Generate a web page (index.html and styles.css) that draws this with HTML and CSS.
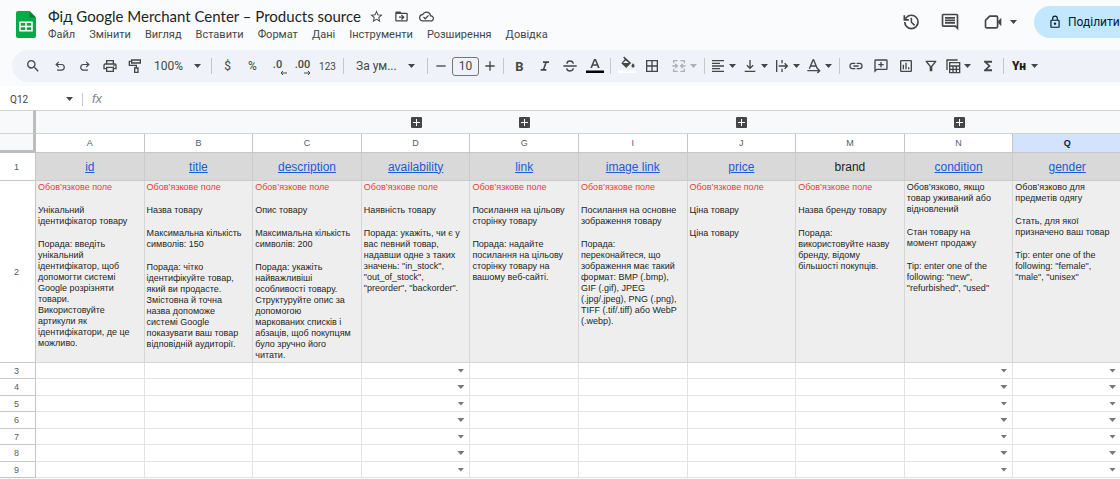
FILE: index.html
```html
<!DOCTYPE html>
<html lang="uk">
<head>
<meta charset="utf-8">
<meta name="viewport" content="width=device-width, initial-scale=1">
<title>Фід Google Merchant Center – Products source</title>
<link rel="stylesheet" href="styles.css">
</head>
<body>
<header class="top">
  <svg class="logo" viewBox="0 0 20 27" aria-hidden="true"><path fill="#00ac47" d="M2 0h11.500l6.500 6.500V25a2 2 0 0 1-2 2H2a2 2 0 0 1-2-2V2a2 2 0 0 1 2-2z"/><path fill="#00832d" d="M13.500 0 20 6.500h-6.500z"/><path fill="none" stroke="#fff" stroke-width="1.500" d="M4 11.200h12v8.600H4zM10 11v9M4 15.500h12"/></svg>
  <div class="heading">
    <div class="title-row">
      <h1 class="title">Фід Google Merchant Center – Products source</h1>
      <button class="icon-btn" aria-label="Позначити"><svg class="ic ic-15" viewBox="0 0 24 24"><path d="m22 9.240-7.190-.620L12 2 9.190 8.630 2 9.240l5.460 4.730L5.820 21 12 17.270 18.180 21l-1.630-7.030L22 9.240zM12 15.400l-3.760 2.270 1-4.280-3.320-2.880 4.380-.380L12 6.100l1.710 4.040 4.380.380-3.320 2.880 1 4.280L12 15.400z"/></svg></button>
      <button class="icon-btn" aria-label="Перемістити"><svg class="ic ic-15" viewBox="0 0 24 24"><path d="M20 6h-8l-2-2H4a2 2 0 0 0-2 2v12a2 2 0 0 0 2 2h16a2 2 0 0 0 2-2V8a2 2 0 0 0-2-2zm0 12H4V8h16v10zm-8.800-2 1.400 1.400L17 13l-4.400-4.400-1.400 1.400 2 2H8v2h5.200z"/></svg></button>
      <button class="icon-btn" aria-label="Стан документа"><svg class="ic ic-15" viewBox="0 0 24 24"><path d="M19.350 10.040A7.490 7.490 0 0 0 12 4C9.110 4 6.600 5.640 5.350 8.040A5.994 5.994 0 0 0 0 14c0 3.310 2.690 6 6 6h13c2.760 0 5-2.240 5-5 0-2.640-2.050-4.780-4.650-4.960zM19 18H6a4 4 0 0 1-.420-7.980l1.070-.110.500-.950A5.469 5.469 0 0 1 12 6c2.620 0 4.880 1.860 5.390 4.430l.300 1.500 1.530.110A2.980 2.980 0 0 1 22 15c0 1.650-1.350 3-3 3zm-9-3.820-2.090-2.090L6.500 13.500 10 17l6.010-6.010-1.410-1.410z"/></svg></button>
    </div>
    <nav class="menus" aria-label="Меню">
      <button>Файл</button><button>Змінити</button><button>Вигляд</button><button>Вставити</button><button>Формат</button><button>Дані</button><button>Інструменти</button><button>Розширення</button><button>Довідка</button>
    </nav>
  </div>
  <div class="actions">
    <button class="act" aria-label="Історія версій"><svg class="ic ic-20" viewBox="0 0 24 24"><path d="M12.500 3A9 9 0 0 0 5 7V4H3v6.500h6.500v-2H6.300A7 7 0 1 1 5.500 12h-2a9 9 0 1 0 9-9zm-1 4v5.700l4.200 4 1.300-1.400-3.600-3.400V7z"/></svg></button>
    <button class="act" aria-label="Коментарі"><svg class="ic ic-20" viewBox="0 0 24 24"><path d="M21.990 4c0-1.100-.890-2-1.990-2H4c-1.100 0-2 .900-2 2v12c0 1.100.900 2 2 2h14l4 4-.010-18zM20 4v13.170L18.830 16H4V4h16zM6 12h12v2H6zm0-3h12v2H6zm0-3h12v2H6z"/></svg></button>
    <button class="act act-meet" aria-label="Відеозустріч"><svg class="ic ic-20" viewBox="0 0 24 24"><path fill="none" stroke="#444746" stroke-width="2" stroke-linejoin="round" d="M8 5h8a1.500 1.500 0 0 1 1.500 1.500v11A1.500 1.500 0 0 1 16 19H4.500A1.500 1.500 0 0 1 3 17.500V10z"/><path d="m18 11 4-4v10l-4-4z"/></svg><span class="caret"></span></button>
    <button class="share"><svg class="ic-share" viewBox="0 0 24 24"><path d="M18 8h-1V6A5 5 0 0 0 7 6v2H6a2 2 0 0 0-2 2v10a2 2 0 0 0 2 2h12a2 2 0 0 0 2-2V10a2 2 0 0 0-2-2zM9 6a3 3 0 0 1 6 0v2H9zm9 14H6V10h12v10zm-6-3a2 2 0 1 0 0-4 2 2 0 0 0 0 4z"/></svg>Поділитися</button>
  </div>
</header>

<div class="toolbar" role="toolbar" aria-label="Панель інструментів">
  <button class="tb tb-search" aria-label="Пошук"><svg class="ic ic-16" viewBox="0 0 24 24"><path d="M15.500 14h-.790l-.280-.270A6.471 6.471 0 0 0 16 9.500 6.500 6.500 0 1 0 9.500 16c1.610 0 3.090-.590 4.230-1.570l.270.280v.790l5 4.990L20.490 19l-4.990-5zm-6 0C7.010 14 5 11.990 5 9.500S7.010 5 9.500 5 14 7.010 14 9.500 11.990 14 9.500 14z"/></svg></button>
  <button class="tb" aria-label="Скасувати"><svg class="ic ic-14" viewBox="0 0 24 24"><path d="M7 20v-2h7.500a3.800 3.800 0 0 0 0-7.600H7.800l2.800 2.800-1.400 1.400L4 9.400l5.200-5.200 1.400 1.400-2.800 2.800h6.700a5.800 5.800 0 0 1 0 11.600z"/></svg></button>
  <button class="tb" aria-label="Повторити"><svg class="ic ic-14" viewBox="0 0 24 24"><path d="M17 20v-2H9.500a3.800 3.800 0 0 1 0-7.600h6.700l-2.800 2.800 1.400 1.400L20 9.400l-5.200-5.200-1.400 1.400 2.800 2.800H9.500a5.800 5.800 0 0 0 0 11.600z"/></svg></button>
  <button class="tb" aria-label="Друк"><svg class="ic ic-16" viewBox="0 0 24 24"><path d="M19 8h-1V3H6v5H5a3 3 0 0 0-3 3v6h4v4h12v-4h4v-6a3 3 0 0 0-3-3zM8 5h8v3H8zm8 14H8v-4h8zm2-4v-2H6v2H4v-4a1 1 0 0 1 1-1h14a1 1 0 0 1 1 1v4zM17 10.500h2v2h-2z"/></svg></button>
  <button class="tb" aria-label="Формат за зразком"><svg class="ic ic-16" viewBox="0 0 24 24"><path fill="none" stroke="#444746" stroke-width="2" d="M7 3h13v4.500H7zM7 5H3.500v6H14v4M11.500 15h5v6.500h-5z"/></svg></button>
  <button class="tb-zoom">100%<span class="caret"></span></button>
  <span class="sep"></span>
  <button class="tb tb-text">$</button>
  <button class="tb tb-text">%</button>
  <button class="tb tb-dec" aria-label="Менше знаків">.0<svg class="dec-arrow dec-left" viewBox="0 0 8 6"><path d="M8 3H2M4 1 2 3l2 2"/></svg></button>
  <button class="tb tb-dec" aria-label="Більше знаків">.00<svg class="dec-arrow" viewBox="0 0 8 6"><path d="M0 3h6M4 1l2 2-2 2"/></svg></button>
  <button class="tb tb-num">123</button>
  <span class="sep"></span>
  <button class="tb-font">За ум...<span class="caret"></span></button>
  <span class="sep"></span>
  <button class="tb tb-step" aria-label="Зменшити шрифт"><svg class="ic ic-16" viewBox="0 0 24 24"><path d="M5 11h14v2H5z"/></svg></button>
  <input class="size" type="text" value="10" aria-label="Розмір шрифту">
  <button class="tb tb-step" aria-label="Збільшити шрифт"><svg class="ic ic-16" viewBox="0 0 24 24"><path d="M19 13h-6v6h-2v-6H5v-2h6V5h2v6h6z"/></svg></button>
  <span class="sep"></span>
  <button class="tb tb-bold">B</button>
  <button class="tb" aria-label="Курсив"><svg class="ic ic-16" viewBox="0 0 24 24"><path d="M9 5v2.500h3L8.800 16.500H5.500V19H14v-2.500h-2.700L14.500 7.500H18V5z"/></svg></button>
  <button class="tb" aria-label="Закреслений"><svg class="ic ic-16" viewBox="0 0 24 24"><path fill="none" stroke="#444746" stroke-width="2" d="M2 12h20M17 8.500C16.500 5.500 14.500 4.500 12 4.500S7.500 5.800 7.500 8.500M7 15.500c.500 3 2.500 4 5 4s4.800-1.200 4.800-4"/></svg></button>
  <button class="tb tb-color" aria-label="Колір тексту"><svg class="ic-color" viewBox="0 0 20 18"><path d="M9 2h2l3.700 9h-1.800l-.900-2.300H7.900L7 11H5.300zm1 1.600L8.400 7.300h3.200z"/><path fill="#000" d="M1 13.500h18V16H1z"/></svg></button>
  <span class="sep"></span>
  <button class="tb tb-color" aria-label="Колір заливки"><svg class="ic-color" viewBox="0 0 20 18"><path d="m6.200.4 1-.9 7 6.600L9.300 11 4.300 6.200l3.400-3.900zm2.400 3L6 6.100h6zM16 6.300c1 1.200 1.500 2 1.500 2.600a1.500 1.500 0 0 1-3 0c0-.6.500-1.400 1.500-2.600z"/><path fill="#fff" d="M1 13.500h18V16H1z"/></svg></button>
  <button class="tb" aria-label="Межі"><svg class="ic ic-16" viewBox="0 0 24 24"><path d="M3 3v18h18V3zm8 16H5v-6h6zm0-8H5V5h6zm8 8h-6v-6h6zm0-8h-6V5h6z"/></svg></button>
  <button class="tb-drop tb-merge" disabled aria-label="Об’єднати"><svg class="ic ic-16" viewBox="0 0 24 24"><path fill="none" stroke="#aeb0b3" stroke-width="2" d="M10 4H4v4M14 4h6v4M10 20H4v-4M14 20h6v-4M2 12h7M6.500 9l3 3-3 3M22 12h-7M17.500 9l-3 3 3 3"/></svg><span class="caret"></span></button>
  <span class="sep"></span>
  <button class="tb-drop" aria-label="Горизонтальне вирівнювання"><svg class="ic ic-16" viewBox="0 0 24 24"><path d="M3 3h18v2H3zm0 4h12v2H3zm0 4h18v2H3zm0 4h12v2H3zm0 4h18v2H3z"/></svg><span class="caret"></span></button>
  <button class="tb-drop" aria-label="Вертикальне вирівнювання"><svg class="ic ic-16" viewBox="0 0 24 24"><path d="M11 3h2v10.200l3-3 1.400 1.400L12 17l-5.400-5.400L8 10.200l3 3zM4 19h16v2H4z"/></svg><span class="caret"></span></button>
  <button class="tb-drop" aria-label="Перенесення"><svg class="ic ic-16" viewBox="0 0 24 24"><path fill="none" stroke="#444746" stroke-width="2" d="M4 3v18M12 3v5M12 16v5M7 12h12M16 8l4 4-4 4"/></svg><span class="caret"></span></button>
  <button class="tb-drop" aria-label="Обертання"><svg class="ic ic-16" viewBox="0 0 24 24"><path fill="none" stroke="#444746" stroke-width="2" d="M5 16 10.500 3h1L17 16M7 12h8M2 19h18M17 15.500l3.500 3.500-3.500 3.500"/></svg><span class="caret"></span></button>
  <span class="sep"></span>
  <button class="tb" aria-label="Посилання"><svg class="ic ic-16" viewBox="0 0 24 24"><path d="M3.900 12c0-1.710 1.390-3.100 3.100-3.100h4V7H7a5 5 0 0 0 0 10h4v-1.900H7A3.100 3.100 0 0 1 3.900 12zM8 13h8v-2H8zm9-6h-4v1.900h4a3.100 3.100 0 0 1 0 6.200h-4V17h4a5 5 0 0 0 0-10z"/></svg></button>
  <button class="tb" aria-label="Коментар"><svg class="ic ic-16" viewBox="0 0 24 24"><path d="M2 22V4a2 2 0 0 1 2-2h16a2 2 0 0 1 2 2v12a2 2 0 0 1-2 2H6zM4 17.200 5.200 16H20V4H4zM11 14v-3H8V9h3V6h2v3h3v2h-3v3z"/></svg></button>
  <button class="tb" aria-label="Діаграма"><svg class="ic ic-16" viewBox="0 0 24 24"><path d="M19 3H5a2 2 0 0 0-2 2v14a2 2 0 0 0 2 2h14a2 2 0 0 0 2-2V5a2 2 0 0 0-2-2zm0 16H5V5h14zM7 10h2v7H7zm4-3h2v10h-2zm4 7h2v3h-2z"/></svg></button>
  <button class="tb" aria-label="Фільтр"><svg class="ic ic-16" viewBox="0 0 24 24"><path d="M4 4h16v1.500l-6 7.800V20h-4v-6.700L4 5.500zm3 2 5 6.500L17 6z"/></svg></button>
  <button class="tb-drop" aria-label="Подання таблиці"><svg class="ic ic-16" viewBox="0 0 24 24"><path fill="none" stroke="#444746" stroke-width="2" d="M3 18V3h16M7 7h15v15H7zM7 12h15M7 17h15M12 12v10M17 12v10"/></svg><span class="caret"></span></button>
  <button class="tb" aria-label="Функції"><svg class="ic ic-16" viewBox="0 0 24 24"><path d="M18 4H6v2l6.500 6L6 18v2h12v-3h-7l5-5-5-5h7z"/></svg></button>
  <span class="sep"></span>
  <button class="tb-drop tb-lang"><span class="lang">Үн</span><span class="caret"></span></button>
</div>

<div class="formula">
  <button class="name-box">Q12<span class="caret"></span></button>
  <span class="formula-sep"></span>
  <label class="fx" for="fx">fx</label>
  <input class="fx-input" id="fx" type="text">
</div>

<table class="sheet">
  <colgroup><col class="col-num"><col><col><col><col><col><col><col><col><col><col></colgroup>
  <thead>
    <tr class="groups"><td class="corner"></td><td></td><td></td><td></td><td><button class="plus" aria-label="Розгорнути"></button></td><td><button class="plus" aria-label="Розгорнути"></button></td><td></td><td><button class="plus" aria-label="Розгорнути"></button></td><td></td><td><button class="plus" aria-label="Розгорнути"></button></td><td></td></tr>
    <tr class="letters"><td class="corner corner-end"></td><th>A</th><th>B</th><th>C</th><th>D</th><th>G</th><th>I</th><th>J</th><th>M</th><th>N</th><th class="current">Q</th></tr>
  </thead>
  <tbody>
    <tr class="names"><th>1</th><td><a href="#">id</a></td><td><a href="#">title</a></td><td><a href="#">description</a></td><td><a href="#">availability</a></td><td><a href="#">link</a></td><td><a href="#">image link</a></td><td><a href="#">price</a></td><td>brand</td><td><a href="#">condition</a></td><td><a href="#">gender</a></td></tr>
    <tr class="notes"><th>2</th>
      <td><p class="req">Обов’язкове поле</p><p>Унікальний<br>ідентифікатор товару</p><p>Порада: введіть<br>унікальний<br>ідентифікатор, щоб<br>допомогти системі<br>Google розрізняти<br>товари.<br>Використовуйте<br>артикули як<br>ідентифікатори, де це<br>можливо.</p></td>
      <td><p class="req">Обов’язкове поле</p><p>Назва товару</p><p>Максимальна кількість<br>символів: 150</p><p>Порада: чітко<br>ідентифікуйте товар,<br>який ви продасте.<br>Змістовна й точна<br>назва допоможе<br>системі Google<br>показувати ваш товар<br>відповідній аудиторії.</p></td>
      <td><p class="req">Обов’язкове поле</p><p>Опис товару</p><p>Максимальна кількість<br>символів: 200</p><p>Порада: укажіть<br>найважливіші<br>особливості товару.<br>Структуруйте опис за<br>допомогою<br>маркованих списків і<br>абзаців, щоб покупцям<br>було зручно його<br>читати.</p></td>
      <td><p class="req">Обов’язкове поле</p><p>Наявність товару</p><p>Порада: укажіть, чи є у<br>вас певний товар,<br>надавши одне з таких<br>значень: "in_stock",<br>"out_of_stock",<br>"preorder", "backorder".</p></td>
      <td><p class="req">Обов’язкове поле</p><p>Посилання на цільову<br>сторінку товару</p><p>Порада: надайте<br>посилання на цільову<br>сторінку товару на<br>вашому веб-сайті.</p></td>
      <td><p class="req">Обов’язкове поле</p><p>Посилання на основне<br>зображення товару</p><p>Порада:<br>переконайтеся, що<br>зображення має такий<br>формат: BMP (.bmp),<br>GIF (.gif), JPEG<br>(.jpg/.jpeg), PNG (.png),<br>TIFF (.tif/.tiff) або WebP<br>(.webp).</p></td>
      <td><p class="req">Обов’язкове поле</p><p>Ціна товару</p><p>Ціна товару</p></td>
      <td><p class="req">Обов’язкове поле</p><p>Назва бренду товару</p><p>Порада:<br>використовуйте назву<br>бренду, відому<br>більшості покупців.</p></td>
      <td><p>Обов’язково, якщо<br>товар уживаний або<br>відновлений</p><p>Стан товару на<br>момент продажу</p><p>Tip: enter one of the<br>following: "new",<br>"refurbished", "used"</p></td>
      <td><p>Обов’язково для<br>предметів одягу</p><p>Стать, для якої<br>призначено ваш товар</p><p>Tip: enter one of the<br>following: "female",<br>"male", "unisex"</p></td>
    </tr>
    <tr class="blank"><th>3</th><td></td><td></td><td></td><td><button class="pick" aria-label="Вибрати"></button></td><td></td><td></td><td></td><td></td><td><button class="pick" aria-label="Вибрати"></button></td><td><button class="pick" aria-label="Вибрати"></button></td></tr>
    <tr class="blank"><th>4</th><td></td><td></td><td></td><td><button class="pick" aria-label="Вибрати"></button></td><td></td><td></td><td></td><td></td><td><button class="pick" aria-label="Вибрати"></button></td><td><button class="pick" aria-label="Вибрати"></button></td></tr>
    <tr class="blank"><th>5</th><td></td><td></td><td></td><td><button class="pick" aria-label="Вибрати"></button></td><td></td><td></td><td></td><td></td><td><button class="pick" aria-label="Вибрати"></button></td><td><button class="pick" aria-label="Вибрати"></button></td></tr>
    <tr class="blank"><th>6</th><td></td><td></td><td></td><td><button class="pick" aria-label="Вибрати"></button></td><td></td><td></td><td></td><td></td><td><button class="pick" aria-label="Вибрати"></button></td><td><button class="pick" aria-label="Вибрати"></button></td></tr>
    <tr class="blank"><th>7</th><td></td><td></td><td></td><td><button class="pick" aria-label="Вибрати"></button></td><td></td><td></td><td></td><td></td><td><button class="pick" aria-label="Вибрати"></button></td><td><button class="pick" aria-label="Вибрати"></button></td></tr>
    <tr class="blank"><th>8</th><td></td><td></td><td></td><td><button class="pick" aria-label="Вибрати"></button></td><td></td><td></td><td></td><td></td><td><button class="pick" aria-label="Вибрати"></button></td><td><button class="pick" aria-label="Вибрати"></button></td></tr>
    <tr class="blank"><th>9</th><td></td><td></td><td></td><td><button class="pick" aria-label="Вибрати"></button></td><td></td><td></td><td></td><td></td><td><button class="pick" aria-label="Вибрати"></button></td><td><button class="pick" aria-label="Вибрати"></button></td></tr>
  </tbody>
</table>
</body>
</html>
```
FILE: styles.css
```css
* { box-sizing: border-box; }

body {
  margin: 0;
  overflow: hidden;
  background: #f9fbfd;
  color: #1f1f1f;
  font-family: Roboto, "Noto Sans", sans-serif;
  font-size: 12px;
}

button, input {
  margin: 0;
  padding: 0;
  border: 0;
  background: none;
  color: #444746;
  font: inherit;
}

.ic, .ic-color, .ic-share { display: block; flex: none; fill: #444746; }
.ic-14 { width: 14px; height: 14px; }
.ic-15 { width: 15px; height: 15px; }
.ic-16 { width: 16px; height: 16px; }
.ic-20 { width: 20px; height: 20px; }

.caret {
  flex: none;
  width: 7px;
  height: 4px;
  background: #444746;
  clip-path: polygon(0 0, 100% 0, 50% 100%);
}

/* Title, menus and actions */
.top { display: flex; height: 50px; padding-left: 16px; }
.logo { flex: none; width: 20px; height: 27px; margin-top: 11px; }
.heading { flex: none; margin-left: 12px; padding-top: 7px; }
.title-row { display: flex; align-items: center; height: 18px; }
.title { margin: 0 3px 0 0; font-family: Lato, Roboto, sans-serif; font-size: 15px; font-weight: 400; line-height: 18px; white-space: nowrap; }
.icon-btn { display: flex; justify-content: center; width: 25px; }
.menus { display: flex; gap: 14px; height: 20px; }
.menus button { font-size: 11px; line-height: 20px; white-space: nowrap; }

.actions { display: flex; flex: none; align-items: center; height: 32px; margin: 6px 0 0 auto; }
.act { display: flex; align-items: center; justify-content: center; width: 39px; height: 32px; }
.act-meet { gap: 7px; width: 50px; margin: 0 9px 0 6px; }
.share {
  display: flex;
  align-items: center;
  gap: 6px;
  height: 32px;
  width: 110px;
  margin-right: -24px;
  padding-left: 14px;
  border-radius: 16px;
  background: #c2e7ff;
  color: #001d35;
  font-size: 12px;
}
.ic-share { width: 14px; height: 14px; fill: #001d35; }

/* Toolbar */
.toolbar {
  display: flex;
  align-items: center;
  height: 32px;
  margin: 0 -20px 4px 12px;
  padding-left: 7px;
  border-radius: 16px;
  background: #eff2f9;
}
.tb { display: flex; flex: none; align-items: center; justify-content: center; width: 25px; height: 25px; }
.tb-search { width: 28px; }
.tb-zoom, .tb-font { display: flex; flex: none; align-items: center; justify-content: space-between; height: 25px; }
.tb-zoom { width: 61px; padding: 0 7px; }
.tb-font { width: 77px; padding: 0 9px; }
.tb-dec { position: relative; height: 20px; padding-bottom: 4px; font-size: 11px; font-weight: 500; }
.dec-arrow { position: absolute; right: 3px; bottom: 0; width: 8px; height: 6px; fill: none; stroke: #444746; }
.tb-num { font-size: 10px; }
.tb-step { width: 20px; }
.tb-bold { font-size: 13px; font-weight: 700; }
.size { width: 27px; height: 19px; margin: 0 1px; border: 1px solid #747775; border-radius: 3px; text-align: center; }
.ic-color { width: 20px; height: 18px; overflow: visible; }
.tb-drop { display: flex; flex: none; align-items: center; gap: 3px; width: 32px; height: 25px; padding-left: 2px; }
.tb-merge { margin-left: 5px; }
.tb-merge .caret { background: #aeb0b3; }
.tb-lang { gap: 5px; width: 40px; padding-left: 5px; }
.lang { font-size: 12px; font-weight: 900; color: #1f1f1f; }
.sep { flex: none; width: 1px; height: 16px; margin: 0 3px; background: #c7c7c7; }

/* Name box and formula */
.formula { display: flex; align-items: center; height: 24px; padding-top: 2px; background: #fff; }
.name-box { display: flex; align-items: center; justify-content: space-between; width: 73px; height: 20px; padding-left: 10px; font-size: 10px; }
.formula-sep { width: 1px; height: 13px; margin: 0 9px; background: #c7c7c7; }
.fx { color: #80868b; font-family: "Liberation Sans", Arial, sans-serif; font-size: 13px; font-style: italic; line-height: 20px; }
.fx-input { flex: 1; height: 20px; margin-left: 8px; }

/* Spreadsheet grid */
.sheet {
  width: calc(100% + 2px);
  table-layout: fixed;
  border-collapse: separate;
  border-spacing: 0;
  background: #fff;
  font-family: "Liberation Sans", Arial, sans-serif;
}
.col-num { width: 36px; }
.sheet th, .sheet td { padding: 0; border: 0 solid #e2e3e3; }
.sheet th { color: #575b5f; font-size: 9px; font-weight: 400; }
.sheet tbody th { padding-right: 2px; border-width: 0 1px 1px 0; border-color: #c4c7c5; }

.groups td { height: 24px; text-align: center; }
.sheet .groups td { border-width: 1px 0; border-color: #d0d2d2; background: #f8f9fa; }
.sheet .groups td.corner, .sheet .letters td.corner { border-right: 3px solid #bdbdbd; background: #f8f9fa; }
.sheet .letters td.corner-end { border-bottom: 3px solid #bdbdbd; }
.letters th { height: 19px; }
.sheet .letters th { border-width: 0 1px 1px 0; border-color: #c4c7c5; }
.sheet .letters th.current { background: #d3e3fd; color: #041e49; font-weight: 700; }

.plus {
  display: block;
  width: 11px;
  height: 11px;
  margin: 0 auto;
  border-radius: 1px;
  background:
    linear-gradient(#fff, #fff) center / 7px 1px no-repeat,
    linear-gradient(#fff, #fff) center / 1px 7px no-repeat,
    #444746;
}

.names th, .names td { height: 28px; }
.sheet .names td { border-width: 0 1px 1px 0; border-color: #cbcbcb; background: #d9d9d9; font-size: 12px; text-align: center; }
.names a { color: #1f5bd0; }

.notes th, .notes td { height: 182px; }
.sheet .notes td {
  padding: 1px 0 0 2px;
  border-width: 0 1px 1px 0;
  border-color: #d6d6d6;
  background: #eee;
  font-size: 9px;
  line-height: 11px;
  vertical-align: top;
  white-space: nowrap;
}
.notes p { margin: 0 0 12px; }
.notes p:last-child { margin: 0; }
.notes .req { color: #ee3a35; }

.blank th, .blank td { height: 16px; }
.blank:nth-child(even) th, .blank:nth-child(even) td { height: 17px; }
.sheet .blank td { border-width: 0 1px 1px 0; }
.pick {
  display: block;
  width: 7px;
  height: 4px;
  margin: 0 5px 0 auto;
  background: #777;
  clip-path: polygon(0 0, 100% 0, 50% 100%);
}
```
